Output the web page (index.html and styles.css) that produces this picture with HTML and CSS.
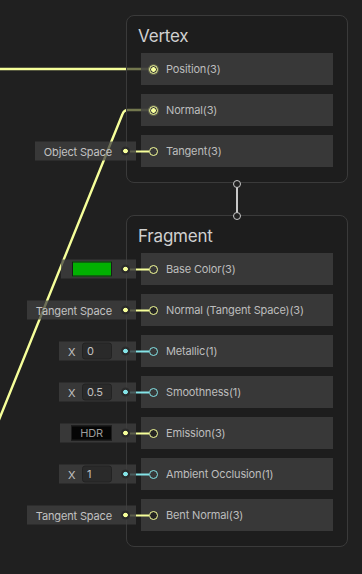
FILE: index.html
```html
<!DOCTYPE html>
<html lang="en">
<head>
    <meta charset="UTF-8" />
    <meta name="viewport" content="width=device-width, initial-scale=1.0" />
    <title>Master Stack</title>
    <link rel="stylesheet" href="styles.css">
</head>
<body>
    <div class="graph">
        <svg class="wires" width="362" height="574" viewBox="0 0 362 574">
            <path d="M0 69 H152" />
            <path d="M-8 437 L122.5 114 Q124 110 128 110 H152" />
        </svg>

        <div class="stack">
            <section class="node">
                <h2 class="title">Vertex</h2>
                <div class="rows">
                    <div class="row"><span class="port linked"></span>Position(3)</div>
                    <div class="row"><span class="port linked"></span>Normal(3)</div>
                    <div class="row">
                        <div class="field"><span>Object Space</span><span class="dot"></span></div>
                        <span class="port"></span>Tangent(3)
                    </div>
                </div>
            </section>

            <div class="link"><span class="knob top"></span><span class="knob bottom"></span></div>

            <section class="node">
                <h2 class="title">Fragment</h2>
                <div class="rows">
                    <div class="row">
                        <div class="field wide"><span class="swatch"></span><span class="dot"></span></div>
                        <span class="port"></span>Base Color(3)
                    </div>
                    <div class="row">
                        <div class="field"><span>Tangent Space</span><span class="dot"></span></div>
                        <span class="port filled"></span>Normal (Tangent Space)(3)
                    </div>
                    <div class="row float">
                        <div class="field num"><span>X</span><span class="value">0</span><span class="dot"></span></div>
                        <span class="port"></span>Metallic(1)
                    </div>
                    <div class="row float">
                        <div class="field num"><span>X</span><span class="value">0.5</span><span class="dot"></span></div>
                        <span class="port"></span>Smoothness(1)
                    </div>
                    <div class="row">
                        <div class="field wide"><span class="hdr">HDR</span><span class="dot"></span></div>
                        <span class="port filled"></span>Emission(3)
                    </div>
                    <div class="row float">
                        <div class="field num"><span>X</span><span class="value">1</span><span class="dot"></span></div>
                        <span class="port"></span>Ambient Occlusion(1)
                    </div>
                    <div class="row">
                        <div class="field"><span>Tangent Space</span><span class="dot"></span></div>
                        <span class="port filled"></span>Bent Normal(3)
                    </div>
                </div>
            </section>
        </div>
    </div>
</body>
</html>
```

FILE: styles.css
```css
body {
    margin: 0;
    background: #202020;
    font-family: Inter, "Noto Sans", sans-serif;
    color: #bdbdbd;
}
.graph {
    position: relative;
    width: 362px;
    height: 574px;
    overflow: hidden;
}
.wires {
    position: absolute;
    top: 0;
    left: 0;
}
.wires path {
    fill: none;
    stroke: #f6ff9a;
    stroke-width: 2.4;
}
.stack {
    position: relative;
    display: flex;
    flex-direction: column;
    width: 222px;
    margin-left: 126px;
    padding-top: 15px;
}
.node {
    background: rgba(28, 28, 28, 0.6);
    border: 1px solid #3a3a3a;
    border-radius: 8px;
    padding: 0 14px 15px;
}
.title {
    margin: 0 0 7px -3px;
    padding-top: 10px;
    font-size: 17px;
    line-height: 20px;
    font-weight: 400;
    letter-spacing: -0.2px;
    color: #d0d0d0;
}
.rows {
    display: flex;
    flex-direction: column;
    gap: 9px;
}
.row {
    --c: #f6ff9a;
    --dim: #5c5e4c;
    position: relative;
    display: flex;
    align-items: center;
    height: 32px;
    padding-left: 8px;
    background: rgba(64, 64, 64, 0.8);
    font-size: 11px;
    letter-spacing: -0.15px;
}
.row.float {
    --c: #84e4e7;
    --dim: #4a5c5d;
}
.port {
    position: relative;
    z-index: 1;
    flex: none;
    box-sizing: border-box;
    width: 9px;
    height: 9px;
    margin-right: 8px;
    border: 1.5px solid var(--c);
    border-radius: 50%;
}
.port.filled {
    background: #242424;
}
.port.linked {
    background: radial-gradient(circle, var(--c) 0 2px, transparent 2.6px);
    box-shadow: 0 0 0 1px rgba(246, 255, 154, 0.2);
}

/* inline value fields sitting left of the node */
.field {
    position: absolute;
    right: calc(100% + 5px);
    top: 50%;
    transform: translateY(-50%);
    display: flex;
    align-items: center;
    height: 19px;
    padding: 0 24px 0 9px;
    background: rgba(64, 64, 64, 0.75);
    color: #c2c2c2;
    white-space: nowrap;
}
.field::before {
    content: "";
    position: absolute;
    right: 0;
    top: calc(50% - 1px);
    width: 6px;
    height: 2px;
    background: var(--dim);
}
.field::after {
    content: "";
    position: absolute;
    left: 100%;
    top: calc(50% - 1px);
    width: 13px;
    height: 2px;
    background: var(--c);
}
.field.wide {
    padding-left: 11px;
}
.field.num {
    width: 77px;
    box-sizing: border-box;
    justify-content: space-between;
}
.dot {
    position: absolute;
    right: 6px;
    top: 50%;
    width: 9px;
    height: 9px;
    margin-top: -4.5px;
    border-radius: 50%;
    background: radial-gradient(circle, var(--c) 0 2px, #2a2a2a 2.6px);
}
.swatch {
    box-sizing: border-box;
    width: 40px;
    height: 15px;
    background: #02b102;
    border: 1px solid #1a1a1a;
}
.hdr {
    box-sizing: border-box;
    width: 41px;
    height: 15px;
    background: #050505;
    border: 1px solid #1c1c1c;
    color: #9c9c9c;
    line-height: 13px;
    text-align: center;
}
.value {
    box-sizing: border-box;
    width: 30px;
    height: 17px;
    padding-left: 4px;
    background: #2a2a2a;
    border: 1px solid #222;
    border-radius: 3px;
    line-height: 15px;
}

/* connector between the two stacks */
.link {
    position: relative;
    z-index: 2;
    height: 32px;
}
.link::before {
    content: "";
    position: absolute;
    left: 110px;
    top: 0;
    bottom: 0;
    width: 2px;
    background: #c8c8c8;
}
.knob {
    position: absolute;
    left: 107px;
    box-sizing: border-box;
    width: 8px;
    height: 8px;
    border: 1.5px solid #c8c8c8;
    border-radius: 50%;
    background: #202020;
}
.knob.top {
    top: -3px;
}
.knob.bottom {
    bottom: -5px;
}
```
